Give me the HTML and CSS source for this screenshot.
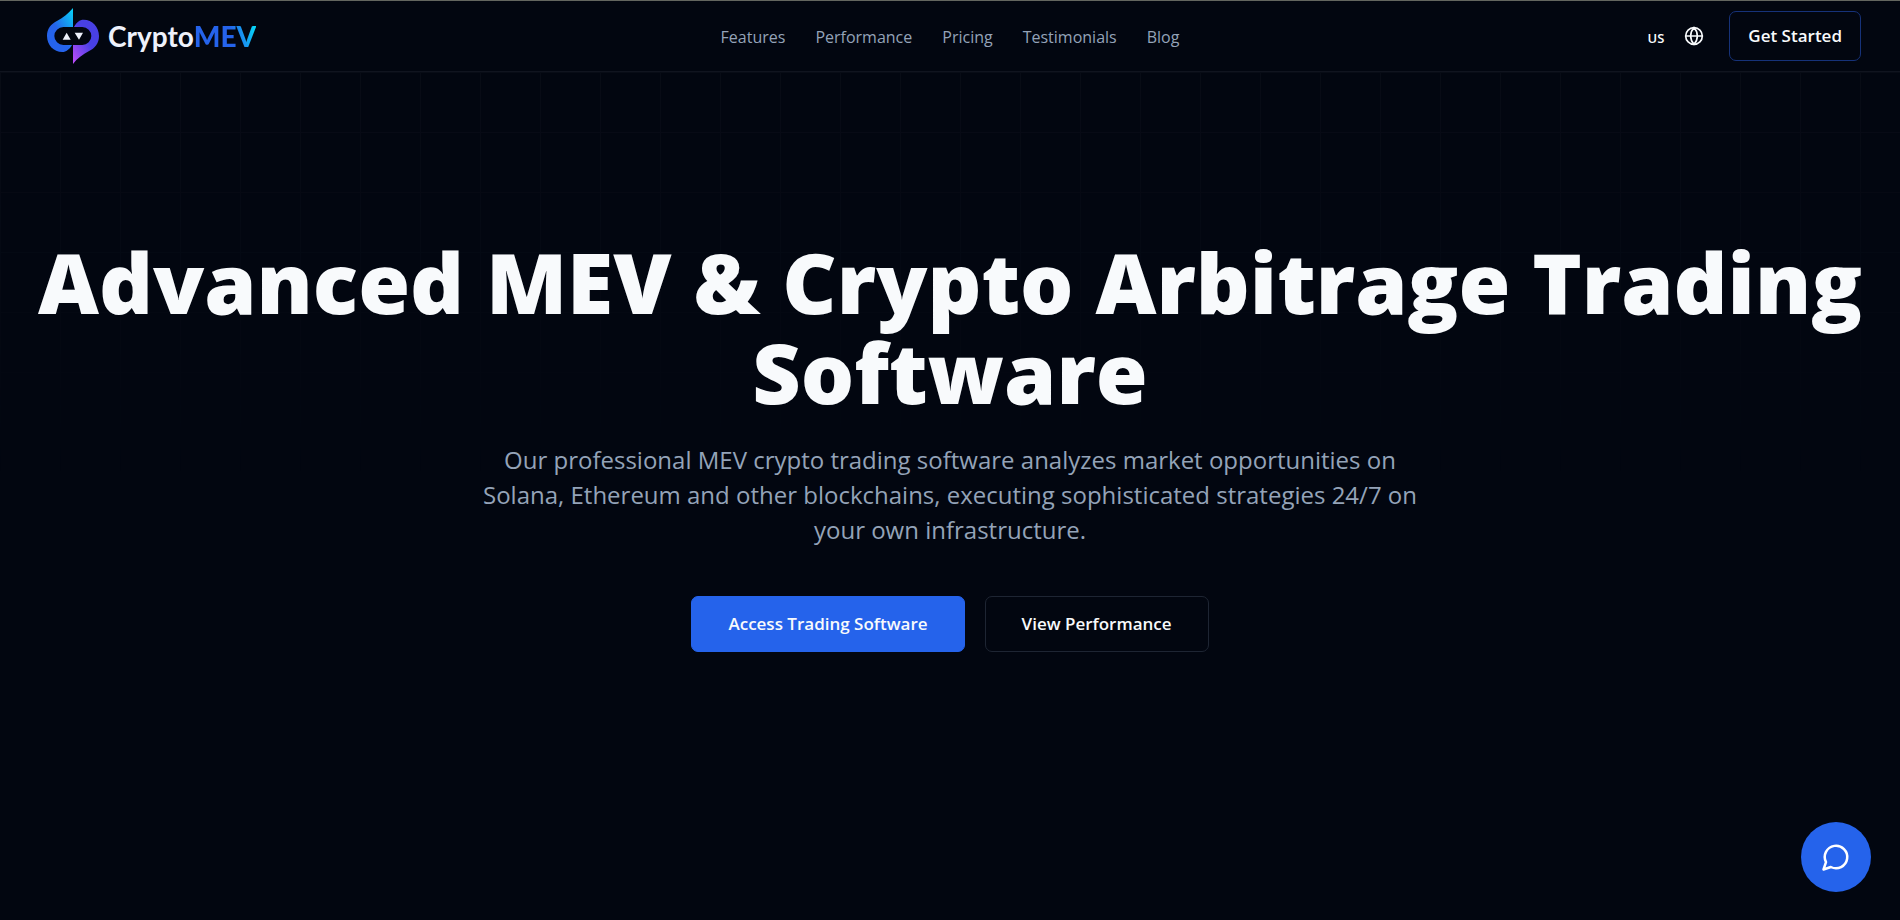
FILE: index.html
```html
<!DOCTYPE html>
<html lang="en">
<head>
<meta charset="utf-8">
<title>CryptoMEV</title>
<link rel="stylesheet" href="styles.css">
</head>
<body>
<header class="site-header">
  <a class="brand" href="#" aria-label="CryptoMEV home">
    <svg class="brand-mark" viewBox="0 0 156 168" aria-hidden="true">
      <defs>
        <linearGradient id="blue" x1="0" y1="1" x2="1" y2="0"><stop offset=".45" stop-color="#2563eb"/><stop offset="1" stop-color="#06d5f8"/></linearGradient>
        <linearGradient id="violet" x1="0" y1="1" x2="1" y2="0"><stop offset="0" stop-color="#c04cfb"/><stop offset=".55" stop-color="#4840e4"/></linearGradient>
      </defs>
      <path fill="url(#blue)" d="M78 0V57H49A27 27 0 0 0 49 111H75C68 124 57 132 46 132C20 132 0 111 0 84C0 62 12 47 31 38C48 29 65 16 78 0Z"/>
      <path fill="url(#violet)" d="M78 168V111H106A27 27 0 0 0 106 57H81C88 43 98 35 110 35C136 35 156 57 156 84C156 106 144 121 125 130C108 139 90 152 78 168Z"/>
      <path fill="#eef1fb" d="M47 95L59 74L71 95ZM83 74H108L96 95Z"/>
    </svg>
    <span class="brand-name">Crypto<span class="brand-accent">MEV</span></span>
  </a>
  <nav class="main-nav" aria-label="Main">
    <a href="#">Features</a><a href="#">Performance</a><a href="#">Pricing</a><a href="#">Testimonials</a><a href="#">Blog</a>
  </nav>
  <div class="actions">
    <button class="language" type="button" aria-label="Language: US"><span>US</span>
      <svg viewBox="0 0 24 24" aria-hidden="true"><circle cx="12" cy="12" r="10"/><path d="M12 2a14.5 14.5 0 0 0 0 20 14.5 14.5 0 0 0 0-20M2 12h20"/></svg>
    </button>
    <a class="button button-small" href="#">Get Started</a>
  </div>
</header>
<main class="hero">
  <h1>Advanced MEV &amp; Crypto Arbitrage Trading Software</h1>
  <p>Our professional MEV crypto trading software analyzes market opportunities on Solana, Ethereum and other blockchains, executing sophisticated strategies 24/7 on your own infrastructure.</p>
  <div class="hero-actions">
    <a class="button button-primary" href="#">Access Trading Software</a>
    <a class="button" href="#">View Performance</a>
  </div>
</main>
<button class="chat" type="button" aria-label="Open chat">
  <svg viewBox="0 0 24 24" aria-hidden="true"><path d="M7.9 20A9 9 0 1 0 4 16.1L2 22Z"/></svg>
</button>
</body>
</html>
```
FILE: styles.css
```css
* { box-sizing: border-box; }
body {
  margin: 0;
  min-height: 100vh;
  display: flex;
  flex-direction: column;
  background: #020610;
  color: #f8fafc;
  font: 17px/28px "Open Sans", "Noto Sans", sans-serif;
}
a { color: inherit; text-decoration: none; }
svg { display: block; fill: none; stroke-linecap: round; stroke-linejoin: round; }
.site-header {
  display: grid;
  grid-template-columns: 1fr auto 1fr;
  align-items: center;
  height: 72px;
  padding: 0 39px;
  border-top: 1px solid #63665f;
  border-bottom: 1px solid #10141f;
}
.brand { display: flex; align-items: center; gap: 9px; padding-left: 8px; }
.brand-mark { width: 52px; height: 56px; }
.brand-name { font: 700 28px/36px Lato, sans-serif; color: #eef1fb; }
.brand-accent {
  font-weight: 900;
  background: linear-gradient(75deg, #2563eb 60%, #06d5f8 95%);
  background-clip: text;
  color: transparent;
}
.main-nav { display: flex; gap: 30px; padding-top: 2px; font-size: 16px; color: #94a3b8; }
.actions { display: flex; align-items: center; justify-content: flex-end; gap: 25px; }
.language {
  display: flex;
  align-items: center;
  gap: 20px;
  padding: 0;
  border: 0;
  background: none;
  color: inherit;
  font: 600 13px/20px "Open Sans", sans-serif;
}
.language span { padding-top: 4px; }
.language svg { width: 20px; height: 20px; stroke: currentColor; stroke-width: 2; }
.button {
  padding: 13px 36px;
  border: 1px solid #1e2533;
  border-radius: 7px;
  font-weight: 600;
}
.button-small { padding: 10px 18px; border-color: #163279; }
.button-primary { background: #2563eb; border-color: #2563eb; }
.hero {
  position: relative;
  flex: 1;
  display: flex;
  flex-direction: column;
  align-items: center;
  padding: 165px 32px 90px;
  text-align: center;
}
.hero::before {
  content: "";
  position: absolute;
  inset: 0;
  z-index: -1;
  background-image:
    linear-gradient(to right, #080c16 1px, transparent 1px),
    linear-gradient(to bottom, #080c16 1px, transparent 1px);
  background-size: 60px 60px;
  mask-image: linear-gradient(to bottom, #000, transparent 400px);
}
h1 { margin: 0 0 25px; font-size: 84px; line-height: 90px; font-weight: 800; }
p { margin: 0 0 49px; max-width: 940px; font-size: 24px; line-height: 35px; color: #94a3b8; }
.hero-actions { display: flex; gap: 20px; }
.chat {
  position: fixed;
  right: 29px;
  bottom: 28px;
  display: grid;
  place-items: center;
  width: 70px;
  height: 70px;
  border: 0;
  border-radius: 50%;
  background: #2563eb;
  color: #fff;
}
.chat svg { width: 30px; height: 30px; stroke: currentColor; stroke-width: 2; }
```
